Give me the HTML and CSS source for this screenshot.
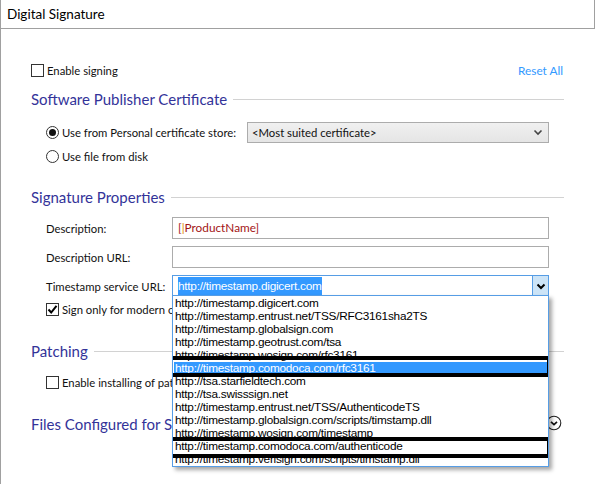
FILE: index.html
```html
<!DOCTYPE html>
<html lang="en">

<head>
    <meta charset="UTF-8">
    <title>Digital Signature</title>
    <link rel="stylesheet" href="styles.css">
</head>

<body>
    <header class="titlebar">Digital Signature</header>

    <main class="content">
        <div class="top-row">
            <label class="check"><span class="box"></span>Enable signing</label>
            <a class="reset" href="#">Reset All</a>
        </div>

        <h2 class="group">Software Publisher Certificate</h2>
        <div class="cert-row">
            <label class="radio"><span class="dot on"></span>Use from Personal certificate store:</label>
            <div class="select">
                <span>&lt;Most suited certificate&gt;</span>
                <svg width="10" height="7" viewBox="0 0 10 7"><path d="M1.5 1.5 L5 5 L8.5 1.5" fill="none" stroke="#444" stroke-width="1.6"/></svg>
            </div>
        </div>
        <div class="radio-row">
            <label class="radio"><span class="dot"></span>Use file from disk</label>
        </div>

        <h2 class="group sig">Signature Properties</h2>
        <div class="field">
            <label>Description:</label>
            <div class="input"><span class="prop">[<i>|</i>ProductName]</span></div>
        </div>
        <div class="field">
            <label>Description URL:</label>
            <div class="input"></div>
        </div>
        <div class="field">
            <label>Timestamp service URL:</label>
            <div class="combo">
                <div class="combo-text"><span class="sel">http://timestamp.digicert.com</span></div>
                <div class="combo-btn">
                    <svg width="10" height="7" viewBox="0 0 10 7"><path d="M1.5 1.5 L5 5 L8.5 1.5" fill="none" stroke="#000" stroke-width="2"/></svg>
                </div>

                <ul class="dropdown">
                    <li>http://timestamp.digicert.com</li>
                    <li>http://timestamp.entrust.net/TSS/RFC3161sha2TS</li>
                    <li>http://timestamp.globalsign.com</li>
                    <li>http://timestamp.geotrust.com/tsa</li>
                    <li>http://timestamp.wosign.com/rfc3161</li>
                    <li class="active">http://timestamp.comodoca.com/rfc3161</li>
                    <li>http://tsa.starfieldtech.com</li>
                    <li>http://tsa.swisssign.net</li>
                    <li>http://timestamp.entrust.net/TSS/AuthenticodeTS</li>
                    <li>http://timestamp.globalsign.com/scripts/timstamp.dll</li>
                    <li>http://timestamp.wosign.com/timestamp</li>
                    <li>http://timestamp.comodoca.com/authenticode</li>
                    <li>http://timestamp.verisign.com/scripts/timstamp.dll</li>
                    <span class="mark mark-1"></span>
                    <span class="mark mark-2"></span>
                </ul>
            </div>
        </div>
        <div class="check-row">
            <label class="check"><span class="box checked"><svg width="11" height="11" viewBox="0 0 11 11"><path d="M1.5 5.5 L4.2 8.5 L9.5 1.8" fill="none" stroke="#000" stroke-width="2"/></svg></span>Sign only for modern operating systems</label>
        </div>

        <h2 class="group patch">Patching</h2>
        <div class="check-row patch-row">
            <label class="check"><span class="box"></span>Enable installing of patches for this package</label>
        </div>

        <h2 class="group files">
            Files Configured for Signing
            <svg class="expand" width="16" height="16" viewBox="0 0 16 16"><circle cx="8" cy="8" r="6.8" fill="#fff" stroke="#222" stroke-width="1.1"/><path d="M5 6.8 L8 9.6 L11 6.8" fill="none" stroke="#111" stroke-width="1.7"/></svg>
        </h2>
    </main>
</body>

</html>
```

FILE: styles.css
```css
body {
    margin: 0;
    width: 595px;
    height: 484px;
    overflow: hidden;
    background-color: white;
    font-family: Lato, "Noto Sans", sans-serif;
    font-size: 11.3px;
    color: #111;
    border-left: 1px solid #a0a0a0;
    box-sizing: border-box;
}

.titlebar {
    width: 594px;
    height: 29px;
    box-sizing: border-box;
    border-right: 1px solid #a0a0a0;
    border-bottom: 1px solid #a0a0a0;
    padding-left: 6px;
    line-height: 28px;
    font-size: 13.5px;
    color: #000;
}

.content {
    padding-left: 30px;
    width: 533px;
}

/* checkbox + radio */
.check,
.radio {
    display: flex;
    align-items: center;
    white-space: nowrap;
}

.box {
    flex-shrink: 0;
    width: 11px;
    height: 11px;
    border: 1px solid #333;
    background: white;
    margin-right: 3px;
    display: inline-flex;
    align-items: center;
    justify-content: center;
}

.dot {
    flex-shrink: 0;
    width: 11px;
    height: 11px;
    border: 1px solid #333;
    border-radius: 50%;
    margin-right: 3px;
    position: relative;
}

.dot.on::after {
    content: "";
    position: absolute;
    left: 2px;
    top: 2px;
    width: 7px;
    height: 7px;
    border-radius: 50%;
    background: #111;
}

.top-row {
    margin-top: 31px;
    height: 20px;
    display: flex;
    align-items: center;
    justify-content: space-between;
}

.reset {
    color: #3399ff;
    text-decoration: none;
    margin-right: 1px;
    font-size: 11.8px;
}

/* section headings with line */
.group {
    margin: 9px 0 0;
    height: 20px;
    display: flex;
    align-items: center;
    font-weight: normal;
    font-size: 15px;
    color: #333399;
    white-space: nowrap;
}

.group::after {
    content: "";
    flex: 1;
    border-top: 1px solid #d2d2d2;
    margin-left: 6px;
}

.group.sig {
    margin-top: 21px;
}

.group.patch {
    margin-top: 22px;
}

.group.files {
    margin-top: 22px;
    position: relative;
}

.group.files::after {
    display: none;
}

.expand {
    position: absolute;
    left: 515px;
    top: 1px;
}

.cert-row {
    margin-top: 13px;
    margin-left: 15px;
    height: 20px;
    display: flex;
    align-items: center;
}

.cert-row .radio {
    width: 201px;
}

.select {
    width: 302px;
    height: 21px;
    box-sizing: border-box;
    border: 1px solid #acacac;
    background: linear-gradient(#f0f0f0, #e5e5e5);
    display: flex;
    align-items: center;
    justify-content: space-between;
    padding: 0 5px 0 4px;
}

.radio-row {
    margin-top: 4px;
    margin-left: 15px;
    height: 20px;
    display: flex;
    align-items: center;
}

/* form fields */
.field {
    margin-top: 7px;
    margin-left: 15px;
    height: 22px;
    display: grid;
    grid-template-columns: 126px 377px;
    align-items: center;
}

.field label {
    white-space: nowrap;
}

.group.sig + .field {
    margin-top: 10px;
}

.input {
    height: 22px;
    box-sizing: border-box;
    border: 1px solid #acacac;
    line-height: 20px;
    padding-left: 5px;
    font-size: 11.8px;
}

.prop {
    color: #a31515;
}

.prop i {
    font-style: normal;
    color: #e08a00;
}

.combo {
    position: relative;
    height: 22px;
    box-sizing: border-box;
    border: 1px solid #569de5;
    display: flex;
    font-family: "Liberation Sans", Arial, sans-serif;
    font-size: 11.8px;
    letter-spacing: -0.25px;
}

.combo-text {
    flex: 1;
    padding-left: 5px;
    line-height: 20px;
}

.sel {
    background: #3399ff;
    color: white;
    padding: 2px 0;
}

.combo-btn {
    width: 15px;
    border-left: 1px solid #569de5;
    background: #cce4f7;
    display: flex;
    align-items: center;
    justify-content: center;
}

.dropdown {
    position: absolute;
    left: -1px;
    top: 19px;
    width: 377px;
    height: 172px;
    box-sizing: border-box;
    margin: 0;
    padding: 1px 0 0;
    list-style: none;
    background: white;
    border: 1px solid #569de5;
    box-shadow: 3px 3px 4px rgba(0, 0, 0, 0.35);
    overflow: hidden;
    z-index: 5;
}

.dropdown li {
    height: 13px;
    line-height: 13px;
    padding-left: 1px;
    margin-left: 1px;
    white-space: nowrap;
    color: #000;
}

.dropdown li.active {
    background: #3399ff;
    color: white;
}

.mark {
    position: absolute;
    left: -5px;
    width: 383px;
    height: 21px;
    box-sizing: border-box;
    border: 4px solid #000;
}

.mark-1 {
    top: 60px;
}

.mark-2 {
    top: 141px;
}

.check-row {
    margin-top: 2px;
    margin-left: 15px;
    height: 20px;
    display: flex;
    align-items: center;
}

.check-row.patch-row {
    margin-top: 11px;
}
```
